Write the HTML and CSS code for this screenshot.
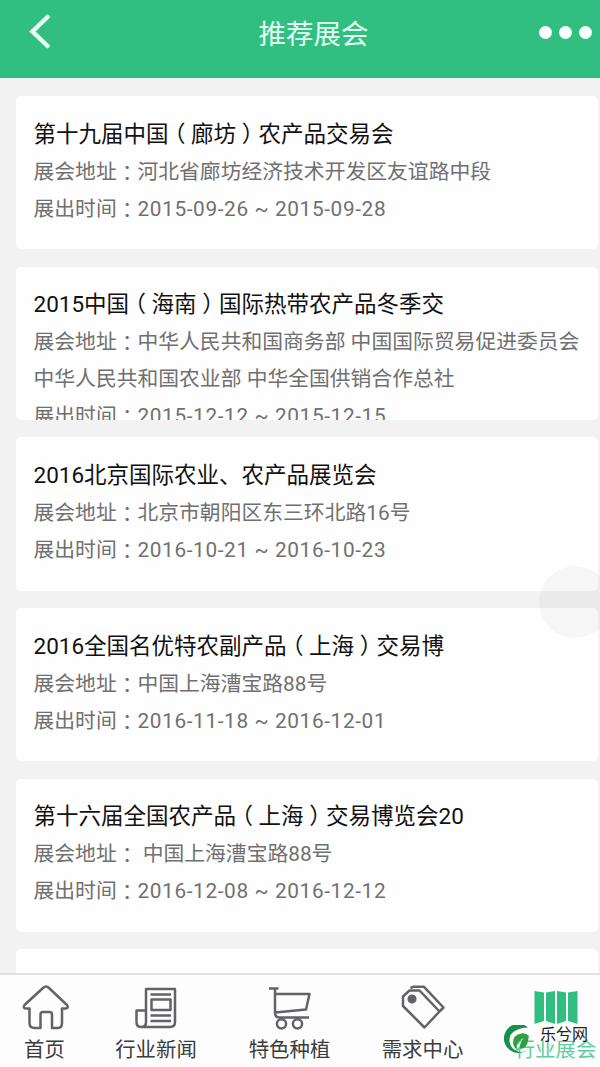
FILE: index.html
```html
<!DOCTYPE html>
<html lang="zh-CN">
<head>
	<meta charset="UTF-8">
	<title>推荐展会</title>
	<link rel="stylesheet" href="styles.css">
</head>
<body>
	<div class="wrap">
		<div class="header">
			<svg class="back" width="24" height="36" viewBox="0 0 24 36"><path d="M20.500 3L5.500 17.500L20.500 32"/></svg>
			<h1>推荐展会</h1>
			<div class="more"><i></i><i></i><i></i></div>
		</div>
		<div class="list">
			<div class="card">
				<h2>第十九届中国<b>（</b>廊坊<b>）</b>农产品交易会</h2>
				<p>展会地址<b>：</b>河北省廊坊经济技术开发区友谊路中段</p>
				<p>展出时间<b>：</b><span class="date">2015-09-26 ~ 2015-09-28</span></p>
			</div>
			<div class="card">
				<h2>2015中国<b>（</b>海南<b>）</b>国际热带农产品冬季交</h2>
				<p>展会地址<b>：</b>中华人民共和国商务部 中国国际贸易促进委员会 中华人民共和国农业部 中华全国供销合作总社</p>
				<p>展出时间<b>：</b><span class="date">2015-12-12 ~ 2015-12-15</span></p>
			</div>
			<div class="card">
				<h2>2016北京国际农业、农产品展览会</h2>
				<p>展会地址<b>：</b>北京市朝阳区东三环北路16号</p>
				<p>展出时间<b>：</b><span class="date">2016-10-21 ~ 2016-10-23</span></p>
			</div>
			<div class="card">
				<h2>2016全国名优特农副产品<b>（</b>上海<b>）</b>交易博</h2>
				<p>展会地址<b>：</b>中国上海漕宝路88号</p>
				<p>展出时间<b>：</b><span class="date">2016-11-18 ~ 2016-12-01</span></p>
			</div>
			<div class="card">
				<h2>第十六届全国农产品<b>（</b>上海<b>）</b>交易博览会20</h2>
				<p>展会地址<b>：</b> 中国上海漕宝路88号</p>
				<p>展出时间<b>：</b><span class="date">2016-12-08 ~ 2016-12-12</span></p>
			</div>
			<div class="card"></div>
		</div>
		<div class="nav">
			<div class="item">
				<svg width="48" height="46" viewBox="0 0 48 46"><path d="M25 2.500Q26.500 2.500 28 4L46 21Q48 24.500 44.500 24.500H41V39Q41 44 37 44H31V30.500Q31 28 28.500 28H22Q19.500 28 19.500 30.500V44H13.500Q8.500 44 8.500 39V24.500H5Q1.500 24.500 3.500 21L22 4Q23.500 2.500 25 2.500Z"/></svg>
				<span>首页</span>
			</div>
			<div class="item">
				<svg width="48" height="46" viewBox="0 0 48 46"><path d="M14 26.500V5H43V38Q43 43 38 43H9Q4.500 43 4.500 38V26.500H14V38Q14 43 9 43M18.500 10.500H39M18.500 31.500H39M18.500 37H39M19.500 15.500H38.500V26H19.500Z"/></svg>
				<span>行业新闻</span>
			</div>
			<div class="item">
				<svg width="48" height="46" viewBox="0 0 48 46"><path d="M3 4.500H12.500M9 4.500V29Q9 33.500 13.500 33.500H43M9 10H43.500L40 25.500L9 28.500"/><circle cx="15.500" cy="39.800" r="4.600"/><circle cx="31.500" cy="39.800" r="4.600"/></svg>
				<span>特色种植</span>
			</div>
			<div class="item">
				<svg width="48" height="46" viewBox="0 0 48 46"><path d="M4 12.500L10.500 6.500H20.500L40.500 27.500L25.500 43.500L4 22ZM11.500 4L14 2.800H25L44.500 23.500L41 27"/><circle class="dot" cx="13" cy="15" r="3.300"/></svg>
				<span>需求中心</span>
			</div>
			<div class="item active">
				<svg width="48" height="46" viewBox="0 0 48 46"><path d="M2.500 7L12 8.500V37L2.500 40ZM14 8.500L23 7V40L14 37ZM25 7L34 8.500V37L25 40ZM36 8.500L45.500 7V40L36 37Z"/></svg>
				<span>行业展会</span>
			</div>
		</div>
		<div class="float"></div>
		<div class="mark">
			<svg width="30" height="30" viewBox="0 0 30 30"><path class="ring" d="M25 2.500A14.500 14.500 0 1 0 29.500 17Q27 25.500 19 27A12 12 0 0 1 7.500 10Q13 2.500 25 2.500Z"/><path class="leaf" d="M26 11Q23 7.500 18 8.500Q9.500 10 10 18Q11 23.500 14 24Q12.500 17 20.500 13Q16.500 17.500 17 24Q24 23.500 25 16Q25.200 13 26 11Z"/></svg>
			<span>乐兮网</span>
		</div>
	</div>
</body>
</html>
```

FILE: styles.css
```css
*{
	padding: 0;
	margin: 0;
	box-sizing: border-box;
}
body{
	background: #f2f2f2;
	font-family: Roboto, "Noto Sans CJK SC", sans-serif;
}
.wrap{
	position: relative;
	height: 1067px;
	display: flex;
	flex-direction: column;
	overflow: hidden;
}
.header{
	height: 78px;
	flex: none;
	display: flex;
	align-items: center;
	justify-content: space-between;
	padding: 0 8px 14px 27px;
	background: #30be81;
}
.back{
	fill: none;
	stroke: #e6fff3;
	stroke-width: 4.5;
	stroke-linecap: round;
}
.header h1{
	font-size: 27.5px;
	line-height: 40px;
	font-weight: 400;
	color: #e6fff3;
	padding: 5px 0 0 37px;
}
.more{
	display: flex;
	gap: 7px;
}
.more i{
	width: 13px;
	height: 13px;
	border-radius: 50%;
	background: #fff;
}
.list{
	flex: 1;
	min-height: 0;
	overflow: hidden;
	padding: 18px 2.5px 0 16px;
}
.card{
	height: 153.3px;
	margin-bottom: 17.4px;
	padding: 18.5px 17px 0 17.5px;
	border-radius: 5px;
	background: #fefefe;
	overflow: hidden;
}
.card h2{
	font-size: 22.5px;
	line-height: 38px;
	font-weight: 400;
	color: #111;
	white-space: nowrap;
	margin-bottom: 1px;
}
.card p{
	font-size: 20.8px;
	line-height: 37px;
	color: #707070;
}
/* full-width punctuation centred in its own square */
.card b{
	display: inline-block;
	width: 1em;
	text-align: center;
	font-weight: 400;
	font-family: "Noto Sans CJK TC", sans-serif;
	font-feature-settings: "halt";
	line-height: 1;
}
.card p b{
	vertical-align: -2px;
}
.date{
	letter-spacing: .62px;
}
.nav{
	height: 94px;
	flex: none;
	display: grid;
	grid-template-columns: 89px 134px 133px 133px 133px;
	border-top: 2px solid #e2e2e2;
	background: #fdfdfd;
}
.item{
	display: flex;
	flex-direction: column;
	align-items: center;
	gap: 3px;
	padding-top: 9px;
	font-size: 20.4px;
	line-height: 34px;
	color: #3c3c3c;
}
.item svg{
	fill: none;
	stroke: #636367;
	stroke-width: 2.5;
	stroke-linejoin: round;
}
.item .dot{
	fill: #636367;
}
.item.active{
	color: #5fcda0;
}
.item.active svg{
	fill: #30be81;
	stroke: none;
}
.float{
	position: absolute;
	left: 539px;
	top: 566px;
	width: 72px;
	height: 72px;
	border-radius: 50%;
	background: rgba(0,0,0,.03);
}
.mark{
	position: absolute;
	left: 503px;
	top: 1025px;
	display: flex;
}
.mark .ring{
	fill: #16914a;
}
.mark .leaf{
	fill: #2f9f45;
}
.mark span{
	font-size: 16px;
	line-height: 20px;
	color: #222;
	padding-left: 7px;
}
```
